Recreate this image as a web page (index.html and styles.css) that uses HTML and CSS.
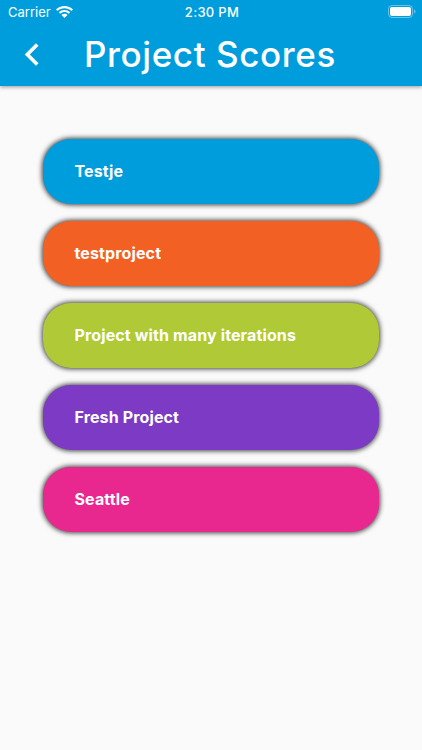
FILE: index.html
```html
<!DOCTYPE html>
<html lang="en">
<head>
    <meta charset="UTF-8">
    <meta name="viewport" content="width=device-width, initial-scale=1.0">
    <title>Project Scores</title>
    <link rel="stylesheet" href="styles.css">
</head>
<body>
    <header>
        <div class="status-bar">
            <div class="carrier">
                <span>Carrier</span>
                <svg class="wifi" viewBox="0 0 17 12">
                    <path d="M8.500 0C5.200 0 2.200 1.300 0 3.400L1.500 5C3.300 3.200 5.800 2.200 8.500 2.200S13.700 3.200 15.500 5L17 3.400C14.800 1.300 11.800 0 8.500 0Z"/>
                    <path d="M8.500 3.900C6.300 3.900 4.300 4.700 2.800 6.200L4.400 7.800C5.500 6.700 6.900 6.100 8.500 6.100S11.500 6.700 12.600 7.800L14.200 6.200C12.700 4.700 10.700 3.900 8.500 3.900Z"/>
                    <path d="M8.500 7.700C7.300 7.700 6.300 8.200 5.500 8.900L8.500 12L11.500 8.900C10.700 8.200 9.700 7.700 8.500 7.700Z"/>
                </svg>
            </div>
            <div class="time">2:30 PM</div>
            <div class="battery-wrap">
                <svg class="battery" viewBox="0 0 28 13">
                    <rect class="battery-case" x="0.500" y="0.500" width="24" height="12" rx="3.500"/>
                    <rect x="2" y="2" width="21" height="9" rx="2"/>
                    <path class="battery-cap" d="M26 4.500C27 4.900 27.500 5.600 27.500 6.500S27 8.100 26 8.500Z"/>
                </svg>
            </div>
        </div>
        <div class="title-bar">
            <button class="back" aria-label="Back">
                <svg viewBox="0 0 14 22">
                    <path d="M12.500 1.500L3 11L12.500 20.500"/>
                </svg>
            </button>
            <h1>Project Scores</h1>
        </div>
    </header>
    <main class="projects">
        <div class="project blue">Testje</div>
        <div class="project orange">testproject</div>
        <div class="project green">Project with many iterations</div>
        <div class="project purple">Fresh Project</div>
        <div class="project pink">Seattle</div>
    </main>
</body>
</html>
```

FILE: styles.css
```css
body {
    margin: 0;
    min-height: 100vh;
    background-color: #fafafa;
    color: #ffffff;
    font-family: Inter, "Liberation Sans", sans-serif;
    font-optical-sizing: none;
}
header {
    height: 85.5px;
    background-color: #009ddc;
    box-shadow: 0 1px 4px rgba(0, 0, 0, 0.4);
}
.status-bar {
    display: grid;
    grid-template-columns: 1fr auto 1fr;
    align-items: center;
    height: 23px;
    padding: 0 6px 0 8px;
    font-size: 13px;
}
.carrier {
    display: flex;
    align-items: center;
    gap: 5.5px;
}
.time {
    font-weight: 500;
    letter-spacing: 0.3px;
}
.wifi {
    width: 17px;
    height: 12px;
    fill: #ffffff;
}
.battery-wrap {
    display: flex;
    justify-content: flex-end;
}
.battery {
    width: 28px;
    height: 13px;
    fill: #ffffff;
}
.battery .battery-case {
    fill: none;
    stroke: #ffffff;
    stroke-opacity: 0.4;
}
.battery .battery-cap {
    fill-opacity: 0.4;
}
.title-bar {
    display: flex;
    align-items: center;
    height: 62px;
}
.back {
    display: flex;
    margin-left: 24px;
    width: 60px;
    padding: 0;
    border: none;
    background: none;
    cursor: pointer;
}
.back svg {
    width: 15px;
    height: 23px;
    fill: none;
    stroke: #ffffff;
    stroke-width: 3.500;
}
h1 {
    margin: 0;
    font-size: 35px;
    font-weight: 450;
    letter-spacing: 0.6px;
    white-space: nowrap;
}
.projects {
    display: flex;
    flex-direction: column;
    gap: 17.5px;
    padding: 53.5px 43px 0;
}
.project {
    display: flex;
    align-items: center;
    box-sizing: border-box;
    height: 64.5px;
    padding-left: 31.5px;
    border-radius: 28px;
    box-shadow: 0 0 5px 1px rgba(0, 0, 0, 0.75);
    font-size: 16px;
    font-weight: 700;
    letter-spacing: 0.13px;
}
.blue {
    background-color: #009ddc;
}
.orange {
    background-color: #f36024;
}
.green {
    background-color: #afca36;
}
.purple {
    background-color: #7d3ac5;
}
.pink {
    background-color: #e8278f;
}
```
